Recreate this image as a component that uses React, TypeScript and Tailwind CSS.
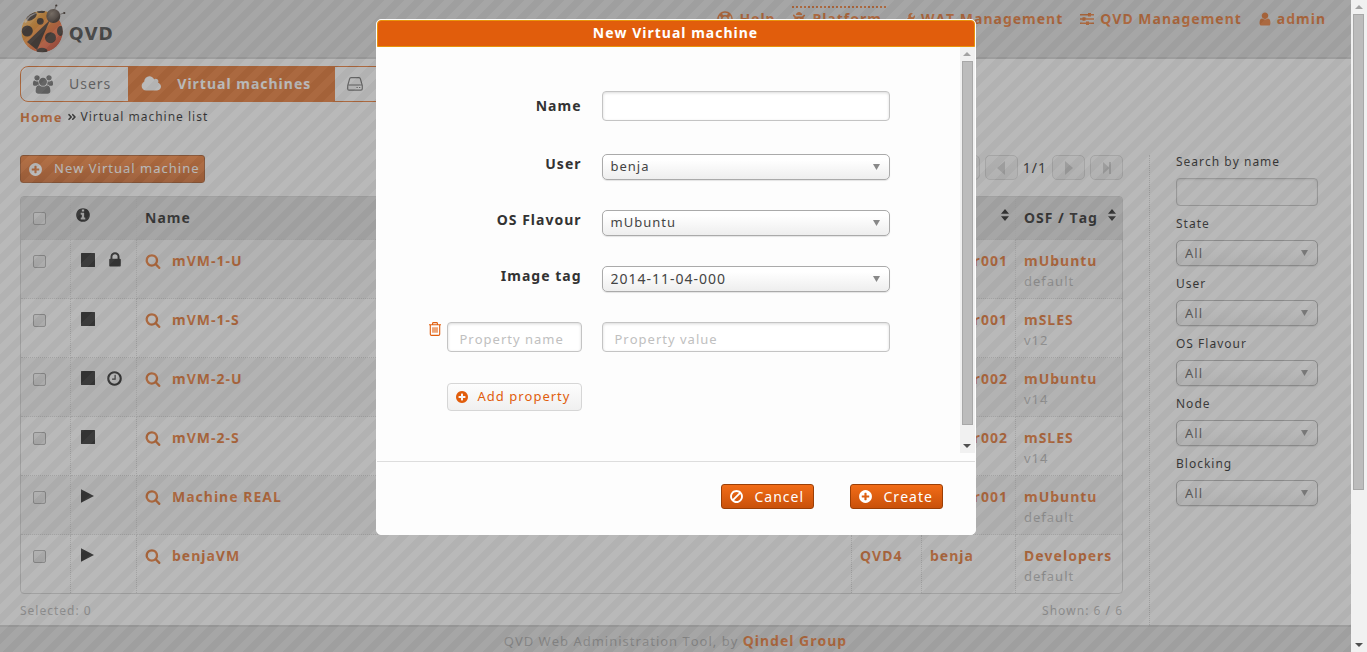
import React from "react";
import { FaAngleDoubleRight, FaBug, FaRegLifeRing, FaWrench } from "react-icons/fa";

/* ---------- icons ---------- */

type IconProps = { className?: string };

const DISC =
  "q0 209-103 385.5t-279.5 279.5-385.5 103-385.5-103-279.5-279.5-103-385.5 103-385.5 279.5-279.5 385.5-103 385.5 103 279.5 279.5 103 385.5z";

function Glyph({ d, box = "0 0 1792 1792", className = "size-4" }: { d: string; box?: string; className?: string }) {
  return (
    <svg viewBox={box} fill="currentColor" aria-hidden="true" className={`shrink-0 ${className}`}>
      <path d={d} />
    </svg>
  );
}

const SearchIcon = (p: IconProps) => (
  <Glyph
    {...p}
    d="M1216 832q0-185-131.5-316.5t-316.5-131.5-316.5 131.5-131.5 316.5 131.5 316.5 316.5 131.5 316.5-131.5 131.5-316.5zm512 832q0 52-38 90t-90 38q-54 0-90-38l-343-342q-179 124-399 124-143 0-273.5-55.5t-225-150-150-225-55.5-273.5 55.5-273.5 150-225 225-150 273.5-55.5 273.5 55.5 225 150 150 225 55.5 273.5q0 220-124 399l343 343q37 37 37 90z"
  />
);
const PlusIcon = (p: IconProps) => (
  <Glyph
    {...p}
    d={`M1344 960v-128q0-26-19-45t-45-19h-256v-256q0-26-19-45t-45-19h-128q-26 0-45 19t-19 45v256h-256q-26 0-45 19t-19 45v128q0 26 19 45t45 19h256v256q0 26 19 45t45 19h128q26 0 45-19t19-45v-256h256q26 0 45-19t19-45zm320-64${DISC}`}
  />
);
const InfoIcon = (p: IconProps) => (
  <Glyph
    {...p}
    d={`M1152 1376v-160q0-14-9-23t-23-9h-96v-512q0-14-9-23t-23-9h-320q-14 0-23 9t-9 23v160q0 14 9 23t23 9h96v320h-96q-14 0-23 9t-9 23v160q0 14 9 23t23 9h448q14 0 23-9t9-23zm-128-896v-160q0-14-9-23t-23-9h-192q-14 0-23 9t-9 23v160q0 14 9 23t23 9h192q14 0 23-9t9-23zm640 416${DISC}`}
  />
);
const ClockIcon = (p: IconProps) => (
  <Glyph
    {...p}
    d={`M1024 544v448q0 14-9 23t-23 9h-320q-14 0-23-9t-9-23v-64q0-14 9-23t23-9h224v-352q0-14 9-23t23-9h64q14 0 23 9t9 23zm416 352q0-148-73-273t-198-198-273-73-273 73-198 198-73 273 73 273 198 198 273 73 273-73 198-198 73-273zm224 0${DISC}`}
  />
);
const LockIcon = (p: IconProps) => (
  <Glyph
    {...p}
    d="M640 768h512v-192q0-106-75-181t-181-75-181 75-75 181v192zm832 96v576q0 40-28 68t-68 28h-960q-40 0-68-28t-28-68v-576q0-40 28-68t68-28h32v-192q0-184 132-316t316-132 316 132 132 316v192h32q40 0 68 28t28 68z"
  />
);
const BanIcon = (p: IconProps) => (
  <Glyph
    {...p}
    d="M1440 893q0-161-87-295l-754 753q137 89 297 89 111 0 211.5-43.5t173.5-116.5 116-174.5 43-212.5zm-999 299l755-754q-135-91-300-91-148 0-273 73t-198 199-73 274q0 162 89 299zm1223-299q0 157-61 300t-163.5 246-245 164-298.5 61-298.5-61-245-164-163.5-246-61-300 61-299.5 163.5-245.5 245-164 298.5-61 298.5 61 245 164 163.5 245.5 61 299.5z"
  />
);
const UserIcon = (p: IconProps) => (
  <Glyph
    {...p}
    box="192 0 1408 1792"
    d="M1536 1399q0 109-62.5 187t-150.5 78h-854q-88 0-150.5-78t-62.5-187q0-85 8.5-160.5t31.5-152 58.5-131 94-89 134.5-34.5q131 128 313 128t313-128q76 0 134.5 34.5t94 89 58.5 131 31.5 152 8.5 160.5zm-256-887q0 159-112.5 271.5t-271.5 112.5-271.5-112.5-112.5-271.5 112.5-271.5 271.5-112.5 271.5 112.5 112.5 271.5z"
  />
);
const UsersIcon = (p: IconProps) => (
  <Glyph
    {...p}
    box="-64 0 1920 1792"
    d="M529 896q-162 5-265 128h-134q-82 0-138-40.5t-56-118.5q0-353 124-353 6 0 43.5 21t97.5 42.5 119 21.5q67 0 133-23-5 37-5 66 0 139 81 256zm1071 637q0 120-73 189.5t-194 69.5h-874q-121 0-194-69.5t-73-189.5q0-53 3.5-103.5t14-109 26.5-108.5 43-97.5 62-81 85.5-53.5 111.5-20q10 0 43 21.5t73 48 107 48 135 21.5 135-21.5 107-48 73-48 43-21.5q61 0 111.5 20t85.5 53.5 62 81 43 97.5 26.5 108.5 14 109 3.5 103.5zm-1024-1277q0 106-75 181t-181 75-181-75-75-181 75-181 181-75 181 75 75 181zm704 384q0 159-112.5 271.5t-271.5 112.5-271.5-112.5-112.5-271.5 112.5-271.5 271.5-112.5 271.5 112.5 112.5 271.5zm576 225q0 78-56 118.5t-138 40.5h-134q-103-123-265-128 81-117 81-256 0-29-5-66 66 23 133 23 59 0 119-21.5t97.5-42.5 43.5-21q124 0 124 353zm-128-609q0 106-75 181t-181 75-181-75-75-181 75-181 181-75 181 75 75 181z"
  />
);
const CloudIcon = (p: IconProps) => (
  <Glyph
    {...p}
    box="0 128 1984 1536"
    d="M1984 1152q0 159-112.5 271.5t-271.5 112.5h-1088q-185 0-316.5-131.5t-131.5-316.5q0-132 71-241.5t187-163.5q-2-28-2-43 0-212 150-362t362-150q158 0 286.5 88t187.5 230q70-62 166-62 106 0 181 75t75 181q0 75-41 138 129 30 213 134.5t84 239.5z"
  />
);
const SquareIcon = (p: IconProps) => <Glyph {...p} box="0 0 14 14" d="M.5 0h13a.5.5 0 0 1 .5.5v13a.5.5 0 0 1-.5.5H.5a.5.5 0 0 1-.5-.5V.5A.5.5 0 0 1 .5 0z" />;
const PlayIcon = (p: IconProps) => <Glyph {...p} box="0 0 14 14" d="M0 .3v13.4L13 7z" />;
const PrevIcon = (p: IconProps) => <Glyph {...p} box="0 0 8 14" d="M8 0v14L0 7z" />;
const NextIcon = (p: IconProps) => <Glyph {...p} box="0 0 8 14" d="M0 0v14l8-7z" />;
const LastIcon = (p: IconProps) => <Glyph {...p} box="0 0 8 12" d="M0 0v12l6-5.500V12h2V0H6v5.500z" />;
const FirstIcon = (p: IconProps) => <Glyph {...p} box="0 0 8 12" d="M8 0v12L2 6.500V12H0V0h2v5.500z" />;
const SortIcon = (p: IconProps) => <Glyph {...p} box="0 0 8 12" d="M4 0l4 4.700H0zM4 12L0 7.300h8z" />;
const CaretIcon = (p: IconProps) => <Glyph {...p} box="0 0 7 6" d="M0 0h7L3.500 6z" />;
const SlidersIcon = (p: IconProps) => (
  <Glyph
    {...p}
    box="0 0 14 14"
    d="M0 2h8V1h3v1h3v1.500h-3v1H8v-1H0zM0 6.200h2.500v-1h3v1H14v1.500H5.500v1h-3v-1H0zM0 10.500h6v-1h3v1h5V12H9v1H6v-1H0z"
  />
);
const DiskIcon = (p: IconProps) => (
  <svg viewBox="0 0 16 14" fill="none" stroke="currentColor" strokeWidth="1.2" aria-hidden="true" className={`shrink-0 ${p.className ?? ""}`}>
    <path d="M.7 8.600 2.600 1.800Q2.900.7 4 .7h8q1.100 0 1.400 1.100l1.900 6.800v3.200q0 1.400-1.400 1.400H2.100Q.7 13.200.7 11.800zM1 8h14" />
    <path d="M9.500 10.500h1.300M12 10.500h1.300" />
  </svg>
);
const TrashIcon = (p: IconProps) => (
  <svg viewBox="0 0 12 14" fill="none" stroke="currentColor" strokeWidth="1.100" aria-hidden="true" className={p.className}>
    <path d="M0 2.800h12M3.600 2.600V1.400q0-.8.8-.8h3.200q.8 0 .8.8v1.200M1.300 3v9.200q0 1.200 1.200 1.200h7q1.200 0 1.200-1.200V3M4 5.200v5.600M6 5.200v5.600M8 5.200v5.600" />
  </svg>
);

function LadybugLogo() {
  return (
    <svg viewBox="20 3 47 50" className="h-[50px] w-[47px]" aria-hidden="true">
      <defs>
        <linearGradient id="wing" x1="0" y1="0" x2="1" y2="1">
          <stop offset="0" stopColor="#f4c56a" />
          <stop offset=".35" stopColor="#f0860c" />
          <stop offset=".7" stopColor="#e8481c" />
          <stop offset="1" stopColor="#a82010" />
        </linearGradient>
        <radialGradient id="head" cx=".35" cy=".3" r=".7">
          <stop offset="0" stopColor="#7a6858" />
          <stop offset="1" stopColor="#1c0d05" />
        </radialGradient>
        <clipPath id="shell">
          <circle cx="42" cy="31.500" r="20.800" />
        </clipPath>
      </defs>
      <path d="M54 12 56 5.500M58 15l6-2" stroke="#1c0d05" strokeWidth=".5" fill="none" />
      <circle cx="56.300" cy="5.500" r="1.100" fill="#1c0d05" />
      <circle cx="64.300" cy="13" r="1.100" fill="#1c0d05" />
      <g clipPath="url(#shell)">
        <circle cx="42" cy="31.500" r="20.800" fill="url(#wing)" />
        <path d="M50 20 27 42l10 8z" fill="#1c0d05" />
        <circle cx="27.300" cy="31" r="5.500" fill="#1c0d05" />
        <circle cx="40.300" cy="21.300" r="3.400" fill="#1c0d05" />
        <circle cx="50.500" cy="37.700" r="5.500" fill="#1c0d05" />
        <ellipse cx="60.500" cy="31" rx="3.500" ry="5" fill="#1c0d05" />
        <ellipse cx="31.500" cy="16.500" rx="6" ry="3.200" fill="#1c0d05" transform="rotate(-35 31.500 16.500)" />
        <ellipse cx="42" cy="51" rx="5.500" ry="3.200" fill="#1c0d05" />
        <ellipse cx="41" cy="11.500" rx="4" ry="1.500" fill="#1c0d05" />
        <path d="M24 22q5-9 14-9-8 2-12 10z" fill="#fff" opacity=".55" />
      </g>
      <circle cx="53.300" cy="16" r="7" fill="url(#head)" />
    </svg>
  );
}

/* ---------- shared controls ---------- */

const raised = "border bg-linear-to-b rounded-[5px]";

function Select({ id, value, size = "text-[13px]" }: { id: string; value: string; size?: string }) {
  return (
    <div className="relative">
      <select
        id={id}
        className={`${raised} ${size} block h-[26px] w-full appearance-none border-[#aaa] from-white from-20% to-[#eee] pr-6 pl-2 tracking-[1px] text-[#444] shadow-[0_1px_1px_rgba(0,0,0,0.1)]`}
      >
        <option>{value}</option>
      </select>
      <CaretIcon className="pointer-events-none absolute top-[10px] right-[10px] h-[6px] w-[7px] text-[#888]" />
    </div>
  );
}

function OrangeButton({ icon, children, className }: { icon: React.ReactNode; children: React.ReactNode; className: string }) {
  return (
    <button
      type="button"
      className={`flex items-center gap-[11px] rounded-[3px] border border-[#9c3f06] bg-linear-to-b from-[#f26c17] to-[#c9510a] pr-1 pl-[7px] tracking-[1px] whitespace-nowrap text-white ${className}`}
    >
      {icon}
      {children}
    </button>
  );
}

function Scrollbar({ className, thumb }: { className: string; thumb: string }) {
  return (
    <div className={`flex shrink-0 flex-col items-center bg-[#f1f1f1] ${className}`} aria-hidden="true">
      <svg viewBox="0 0 8 4" className="my-[5px] h-1 w-2 shrink-0 fill-[#a3a3a3]"><path d="M4 0l4 4H0z" /></svg>
      <div className={`w-[11px] border border-[#a8a8a8] bg-[#bcbcbc] ${thumb}`} />
      <svg viewBox="0 0 8 4" className="mt-auto mb-[5px] h-1 w-2 shrink-0 fill-[#505050]"><path d="M0 0h8L4 4z" /></svg>
    </div>
  );
}

/* ---------- page ---------- */

const link = "font-bold text-[#e15d0c]";

function Header() {
  const item = "flex items-center gap-1.5 border-t-2 pt-px";
  return (
    <header className="flex h-[59px] items-start justify-between border-b-2 border-[#c4c4c4] bg-[#d7d7d7] pr-[25px] pl-5">
      <a href="#home" className="flex items-center gap-0.5 pt-[3px]" aria-label="QVD home">
        <LadybugLogo />
        <span className="pt-3 font-['DejaVu_Sans',sans-serif] text-[17px] leading-6 font-bold tracking-[1px] text-[#222]">QVD</span>
      </a>
      <nav className={`flex gap-[17px] pt-1.5 text-sm leading-5 ${link}`}>
        <a href="#help" className={`${item} border-transparent`}><FaRegLifeRing className="size-4" />Help</a>
        <a href="#platform" className={`${item} border-dotted border-[#e15d0c] pr-1`}><FaBug className="size-3.5" />Platform</a>
        <a href="#wat" className={`${item} border-transparent`}><FaWrench className="size-3" />WAT Management</a>
        <a href="#qvd" className={`${item} border-transparent`}><SlidersIcon className="size-3.5" />QVD Management</a>
        <a href="#admin" className={`${item} border-transparent`}><UserIcon className="h-4 w-3" />admin</a>
      </nav>
    </header>
  );
}

function Tabs() {
  const tab = "flex items-center border-r border-[#e15d0c] last:border-r-0";
  return (
    <nav className="flex h-9 w-fit overflow-hidden rounded-lg border border-[#e15d0c] text-sm tracking-[1px] text-[#555]">
      <a href="#users" className={`${tab} gap-4 pr-[17px] pl-3`}><UsersIcon className="h-[19px] w-5" />Users</a>
      <a href="#vms" className={`${tab} gap-4 bg-[#e15d0c] pr-[23px] pl-3 font-bold text-white`}><CloudIcon className="h-4 w-5" />Virtual machines</a>
      <a href="#nodes" className={`${tab} gap-5 px-3`}><DiskIcon className="h-3.5 w-4" />Nodes</a>
      <a href="#flavours" className={`${tab} px-3`}>OS Flavours</a>
      <a href="#images" className={`${tab} px-3`}>Disk images</a>
    </nav>
  );
}

const rows = [
  { name: "mVM-1-U", state: "stop", flag: "lock", node: "QVD1", user: "mUser001", osf: "mUbuntu", tag: "default" },
  { name: "mVM-1-S", state: "stop", flag: "", node: "QVD1", user: "mUser001", osf: "mSLES", tag: "v12" },
  { name: "mVM-2-U", state: "stop", flag: "clock", node: "QVD2", user: "mUser002", osf: "mUbuntu", tag: "v14" },
  { name: "mVM-2-S", state: "stop", flag: "", node: "QVD2", user: "mUser002", osf: "mSLES", tag: "v14" },
  { name: "Machine REAL", state: "play", flag: "", node: "QVD3", user: "mUser001", osf: "mUbuntu", tag: "default" },
  { name: "benjaVM", state: "play", flag: "", node: "QVD4", user: "benja", osf: "Developers", tag: "default" },
];

function Check({ label }: { label: string }) {
  return (
    <input
      type="checkbox"
      aria-label={label}
      className="block size-[13px] appearance-none rounded-[2px] border border-[#9c9c9c] bg-linear-to-b from-[#ededed] to-[#dedede]"
    />
  );
}

function MachineTable() {
  const cell = "border-r border-dotted border-[#d0d0d0] last:border-r-0 px-2 align-top";
  const td = `${cell} h-[59px] border-b pt-2.5 group-last:h-[58px] group-last:border-b-0`;
  const th = `${cell} h-[43px] border-b pt-2.5 text-left font-bold`;
  return (
    <div className="overflow-hidden rounded-[4px] border border-[#cdcdcd]">
      <table className="w-full table-fixed border-separate border-spacing-0 text-sm leading-[21px]">
        <colgroup>
          <col className="w-[50px]" />
          <col className="w-[66px]" />
          <col />
          <col className="w-[70px]" />
          <col className="w-[94px]" />
          <col className="w-[106px]" />
        </colgroup>
        <thead className="bg-[#d7d7d7]">
          <tr>
            <th className={th}><div className="pt-[5px] pl-1"><Check label="Select all" /></div></th>
            <th className={th}><InfoIcon className="-ml-1 size-4" /></th>
            <th className={th}>Name</th>
            <th className={th}>Node</th>
            <th className={th}><div className="flex justify-between">User<SortIcon className="mt-0.5 -mr-0.5 h-3 w-2" /></div></th>
            <th className={th}><div className="-mr-0.5 flex justify-between whitespace-nowrap">OSF / Tag<SortIcon className="mt-0.5 h-3 w-2" /></div></th>
          </tr>
        </thead>
        <tbody>
          {rows.map((r) => (
            <tr key={r.name} className="group odd:bg-[#f1f1f1]">
              <td className={td}><div className="pt-[5px] pl-1"><Check label={`Select ${r.name}`} /></div></td>
              <td className={td}>
                <div className="flex h-5 items-center gap-[11px] pl-0.5">
                  {r.state === "stop" ? <SquareIcon className="size-3.5" /> : <PlayIcon className="size-3.5" />}
                  {r.flag === "lock" && <LockIcon className="size-[18px]" />}
                  {r.flag === "clock" && <ClockIcon className="size-[17px]" />}
                </div>
              </td>
              <td className={td}>
                <a href="#vm" className={`flex items-center gap-[11px] ${link}`}><SearchIcon />{r.name}</a>
              </td>
              <td className={td}><a href="#node" className={link}>{r.node}</a></td>
              <td className={td}><a href="#user" className={link}>{r.user}</a></td>
              <td className={td}>
                <a href="#osf" className={link}>{r.osf}</a>
                <div className="text-[13px] text-[#aaa]">{r.tag}</div>
              </td>
            </tr>
          ))}
        </tbody>
      </table>
    </div>
  );
}

function PageButton({ label, children }: { label: string; children: React.ReactNode }) {
  return (
    <button type="button" aria-label={label} className={`${raised} flex h-[25px] w-[33px] items-center justify-center border-[#d4d4d4] from-[#f8f8f8] to-[#eee] text-[#c4c4c4]`}>
      {children}
    </button>
  );
}

function Filters() {
  return (
    <aside className="flex w-[202px] shrink-0 flex-col gap-2 border-l border-dotted border-[#c8c8c8] pr-[33px] pl-[26px] text-xs leading-5">
      <div className="-mt-[3px] flex flex-col gap-1.5">
        <label htmlFor="f-name">Search by name</label>
        <input id="f-name" className="h-7 w-full rounded-[4px] border border-[#bbb] bg-transparent px-2 shadow-[inset_0_1px_2px_rgba(0,0,0,0.12)]" />
      </div>
      {["State", "User", "OS Flavour", "Node", "Blocking"].map((name) => (
        <div key={name} className="flex flex-col gap-1.5">
          <label htmlFor={`f-${name}`}>{name}</label>
          <Select id={`f-${name}`} value="All" />
        </div>
      ))}
    </aside>
  );
}

/* ---------- dialog ---------- */

function Dialog() {
  const label = "text-right text-sm leading-5 font-bold text-[#333]";
  const field =
    "h-[30px] w-full min-w-0 rounded-[4px] border border-[#c4c4c4] bg-white px-3 pt-1 text-[13px] tracking-[1px] shadow-[inset_0_1px_3px_rgba(0,0,0,0.15)] placeholder:text-[#c0c0c0]";
  return (
    <section role="dialog" aria-labelledby="dlg-title" className="w-[600px] max-w-full rounded-[5px] border border-[#fdfdfd] bg-[#fdfdfd]">
      <h2 id="dlg-title" className="rounded-t-[4px] border border-[#e8940c] bg-[#e15d0c] pb-px text-center text-sm leading-6 font-bold text-white">
        New Virtual machine
      </h2>
      <div className="flex">
        <form className="grid flex-1 grid-cols-[153px_288px] content-start gap-x-5 gap-y-[30px] pt-11 pb-[42px] pl-[52px]">
          <label htmlFor="name" className={`${label} pt-[5px]`}>Name</label>
          <div className="pb-[3px]"><input id="name" className={field} /></div>
          <label htmlFor="user" className={label}>User</label>
          <Select id="user" value="benja" />
          <label htmlFor="osf" className={label}>OS Flavour</label>
          <Select id="osf" value="mUbuntu" />
          <label htmlFor="tag" className={label}>Image tag</label>
          <Select id="tag" value="2014-11-04-000" size="text-sm" />
          <div className="flex items-start gap-[6px] pb-px">
            <button type="button" aria-label="Delete property" className="shrink-0 text-[#e15d0c]"><TrashIcon className="h-3.5 w-3" /></button>
            <input aria-label="Property name" placeholder="Property name" className={field} />
          </div>
          <input aria-label="Property value" placeholder="Property value" className={field} />
          <button
            type="button"
            className="flex h-7 w-[135px] items-center gap-[9px] justify-self-end rounded-[4px] border border-[#d6d6d6] bg-linear-to-b from-[#fdfdfd] to-[#f0f0f0] pl-[7px] text-[13px] tracking-[1px] whitespace-nowrap text-[#e15d0c]"
          >
            <PlusIcon className="size-3.5" />
            Add property
          </button>
        </form>
        <Scrollbar className="w-[15px]" thumb="h-[364px]" />
      </div>
      <div className="mt-2 flex justify-end gap-9 border-t border-[#ddd] pt-[22px] pr-8 pb-[25px] text-sm">
        <OrangeButton icon={<BanIcon className="size-[15px]" />} className="h-[25px] w-[93px]">Cancel</OrangeButton>
        <OrangeButton icon={<PlusIcon className="size-[15px]" />} className="h-[25px] w-[93px]">Create</OrangeButton>
      </div>
    </section>
  );
}

export default function App() {
  return (
    <div className="flex h-screen overflow-hidden font-['Noto_Sans',sans-serif] tracking-[1px] text-black [font-kerning:none]">
      <div className="relative min-w-0 flex-1 overflow-hidden bg-[#fdfdfd]">
        <Header />
        <div className="pt-[7px] pl-5">
          <Tabs />
          <p className="flex items-center gap-1 pt-[5px] text-xs leading-5">
            <a href="#home" className={`${link} text-[13px]`}>Home</a>
            <FaAngleDoubleRight className="size-2.5" />
            Virtual machine list
          </p>
        </div>
        <div className="flex gap-[26px] pt-7 pl-5">
          <main className="min-w-0 flex-1">
            <div className="flex items-start justify-between pb-[13px]">
              <OrangeButton icon={<PlusIcon className="size-[15px]" />} className="h-7 text-[13px]">New Virtual machine</OrangeButton>
              <div className="flex items-center gap-[5px] text-sm">
                <PageButton label="First page"><FirstIcon className="h-3 w-2" /></PageButton>
                <PageButton label="Previous page"><PrevIcon className="h-3.5 w-2" /></PageButton>
                <span>1/1</span>
                <PageButton label="Next page"><NextIcon className="h-3.5 w-2" /></PageButton>
                <PageButton label="Last page"><LastIcon className="h-3 w-2" /></PageButton>
              </div>
            </div>
            <MachineTable />
            <div className="flex justify-between pt-[7px] pb-1 text-xs leading-5 text-[#aaa]">
              <span>Selected: 0</span>
              <span>Shown: 6 / 6</span>
            </div>
          </main>
          <Filters />
        </div>
        <footer className="border-t-2 border-[#c4c4c4] bg-[#d7d7d7] pt-1 pb-8 text-center text-[13px] leading-5 text-[#999]">
          QVD Web Administration Tool, by <a href="#qindel" className={`${link} text-sm leading-5`}>Qindel Group</a>
        </footer>
        <div className="absolute inset-0 bg-[linear-gradient(135deg,#666_12.5%,#757575_12.5%,#757575_37.5%,#666_37.5%,#666_62.5%,#757575_62.5%,#757575_87.5%,#666_87.5%)] bg-[length:20px_20px] opacity-50" />
        <div className="absolute inset-0 flex items-start justify-center pt-[19px]">
          <Dialog />
        </div>
      </div>
      <Scrollbar className="w-4 pr-px" thumb="h-[73%]" />
    </div>
  );
}
